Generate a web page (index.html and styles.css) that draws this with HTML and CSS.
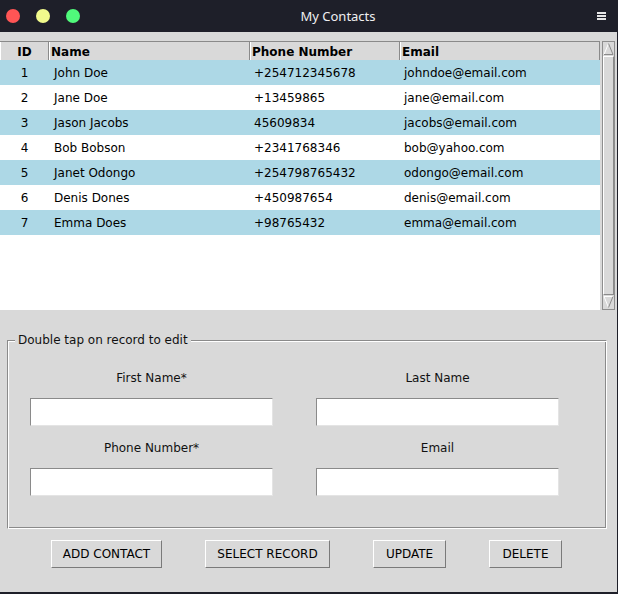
FILE: index.html
```html
<!DOCTYPE html>
<html>
<head>
<meta charset="utf-8">
<title>My Contacts</title>
<link rel="stylesheet" href="styles.css">
</head>
<body>
<div class="window">
  <header class="titlebar">
    <div class="lights">
      <span class="dot red"></span>
      <span class="dot yellow"></span>
      <span class="dot green"></span>
    </div>
    <div class="title">My Contacts</div>
    <div class="menu">
      <svg width="9" height="8" viewBox="0 0 9 8"><rect x="0" y="0" width="9" height="2" fill="#e6e6e6"/><rect x="0" y="3" width="9" height="2" fill="#e6e6e6"/><rect x="0" y="6" width="9" height="2" fill="#e6e6e6"/></svg>
    </div>
  </header>
  <main class="content">
    <div class="table-area">
      <div class="tree">
        <div class="head">
          <div class="hc c-id">ID</div>
          <div class="hc c-name">Name</div>
          <div class="hc c-phone">Phone Number</div>
          <div class="hc c-email">Email</div>
        </div>
        <div class="row odd"><div class="c c-id">1</div><div class="c c-name">John Doe</div><div class="c c-phone">+254712345678</div><div class="c c-email">johndoe@email.com</div></div>
        <div class="row"><div class="c c-id">2</div><div class="c c-name">Jane Doe</div><div class="c c-phone">+13459865</div><div class="c c-email">jane@email.com</div></div>
        <div class="row odd"><div class="c c-id">3</div><div class="c c-name">Jason Jacobs</div><div class="c c-phone">45609834</div><div class="c c-email">jacobs@email.com</div></div>
        <div class="row"><div class="c c-id">4</div><div class="c c-name">Bob Bobson</div><div class="c c-phone">+2341768346</div><div class="c c-email">bob@yahoo.com</div></div>
        <div class="row odd"><div class="c c-id">5</div><div class="c c-name">Janet Odongo</div><div class="c c-phone">+254798765432</div><div class="c c-email">odongo@email.com</div></div>
        <div class="row"><div class="c c-id">6</div><div class="c c-name">Denis Dones</div><div class="c c-phone">+450987654</div><div class="c c-email">denis@email.com</div></div>
        <div class="row odd"><div class="c c-id">7</div><div class="c c-name">Emma Does</div><div class="c c-phone">+98765432</div><div class="c c-email">emma@email.com</div></div>
      </div>
      <div class="scrollbar">
        <div class="arrow">
          <svg width="11" height="14" viewBox="0 0 11 14"><polygon points="5.5,1.5 10,12.5 1,12.5" fill="#d9d9d9"/><line x1="1" y1="12.5" x2="5.5" y2="1.5" stroke="#ffffff" stroke-width="1"/><line x1="5.5" y1="1.5" x2="10" y2="12.5" stroke="#8a8a8a" stroke-width="1"/><line x1="1" y1="12.5" x2="10" y2="12.5" stroke="#8a8a8a" stroke-width="1"/></svg>
        </div>
        <div class="thumb"></div>
        <div class="arrow">
          <svg width="11" height="14" viewBox="0 0 11 14"><polygon points="1,1.5 10,1.5 5.5,12.5" fill="#d9d9d9"/><line x1="1" y1="1.5" x2="10" y2="1.5" stroke="#ffffff" stroke-width="1"/><line x1="1" y1="1.5" x2="5.5" y2="12.5" stroke="#ffffff" stroke-width="1"/><line x1="10" y1="1.5" x2="5.5" y2="12.5" stroke="#8a8a8a" stroke-width="1"/></svg>
        </div>
      </div>
    </div>

    <fieldset class="form">
      <legend class="legend">Double tap on record to edit</legend>
      <div class="grid">
        <label class="lbl">First Name*</label>
        <label class="lbl">Last Name</label>
        <input class="entry" type="text">
        <input class="entry" type="text">
        <label class="lbl">Phone Number*</label>
        <label class="lbl">Email</label>
        <input class="entry" type="text">
        <input class="entry" type="text">
      </div>
    </fieldset>

    <div class="buttons">
      <button class="btn btn-add">ADD CONTACT</button>
      <button class="btn btn-select">SELECT RECORD</button>
      <button class="btn btn-small">UPDATE</button>
      <button class="btn btn-small">DELETE</button>
    </div>
  </main>
</div>
</body>
</html>
```
FILE: styles.css
```css
* { box-sizing: border-box; }
html, body { margin: 0; padding: 0; }
body {
  background: #1e1f29;
  font-family: "DejaVu Sans", sans-serif;
  font-size: 12px;
  color: #000;
}
.window {
  width: 618px;
  height: 594px;
  display: flex;
  flex-direction: column;
}
.titlebar {
  height: 32px;
  flex: none;
  display: flex;
  align-items: center;
  background: #1e1f29;
}
.lights {
  width: 80px;
  display: flex;
  gap: 16px;
  padding-left: 6px;
}
.dot {
  width: 14px;
  height: 14px;
  border-radius: 50%;
  display: block;
}
.red { background: #ff5555; }
.yellow { background: #f1fa8c; }
.green { background: #50fa7b; }
.title {
  flex: 1;
  text-align: center;
  color: #f0f0f0;
  font-family: "Noto Sans", sans-serif;
  font-size: 13px;
  line-height: 16px;
  padding-bottom: 1px;
}
.menu {
  width: 22px;
  padding-left: 1px;
  display: flex;
  align-items: center;
}
.menu svg { display: block; }

.content {
  flex: 1;
  background: #d9d9d9;
  margin: 0 1px 2px 0;
  padding-top: 9px;
  display: flex;
  flex-direction: column;
}
.table-area {
  height: 269px;
  display: flex;
  flex: none;
}
.tree {
  width: 600px;
  background: #ffffff;
  border-top: 1px solid #8a8a8a;
}
.head {
  height: 18px;
  display: flex;
  background: #d9d9d9;
}
.hc {
  font-weight: bold;
  line-height: 20px;
  border-left: 1px solid #ffffff;
  border-right: 1px solid #8a8a8a;
  padding-left: 1px;
  white-space: nowrap;
}
.c-id { width: 49px; }
.c-name { width: 201px; }
.c-phone { width: 150px; }
.c-email { width: 200px; }
.hc.c-id { text-align: center; padding-left: 0; }
.row {
  height: 25px;
  display: flex;
  line-height: 27px;
}
.row.odd { background: #add8e6; }
.c { padding-left: 4px; white-space: nowrap; }
.c.c-name { padding-left: 5px; }
.c.c-id { text-align: center; padding-left: 0; }

.scrollbar {
  margin-left: 2px;
  width: 13px;
  border: 1px solid #8e8e8e;
  background: #d9d9d9;
  display: flex;
  flex-direction: column;
}
.arrow {
  height: 14px;
  flex: none;
}
.arrow svg { display: block; }
.thumb {
  flex: 1;
  border-style: solid;
  border-width: 1px;
  border-color: #ffffff #8a8a8a #8a8a8a #ffffff;
}

.form {
  margin: 22px 0 0 7px;
  width: 600px;
  padding: 20px 0 32px 0;
  border-style: solid;
  border-width: 1px;
  border-color: #8a8a8a #ffffff #ffffff #8a8a8a;
  box-shadow: inset 1px 1px 0 #ffffff, inset -1px -1px 0 #8a8a8a;
  min-width: 0;
}
.legend {
  margin-left: 7px;
  padding: 0 3px;
  line-height: 16px;
  font-size: 12px;
  background: #d9d9d9;
  color: #111;
}
.grid {
  display: grid;
  grid-template-columns: 243px 243px;
  grid-template-rows: 20px 28px 22px 28px;
  column-gap: 43px;
  row-gap: 10px;
  padding-left: 22px;
}
.lbl {
  text-align: center;
  line-height: 20px;
  align-self: end;
  color: #111;
}
.entry {
  width: 243px;
  height: 28px;
  margin: 0;
  padding: 0 4px;
  background: #ffffff;
  border-style: solid;
  border-width: 1px;
  border-color: #8a8a8a #e4e4e4 #e4e4e4 #8a8a8a;
  font-family: "DejaVu Sans", sans-serif;
  font-size: 12px;
  outline: none;
}

.buttons {
  margin-top: 11px;
  padding-left: 51px;
  display: flex;
  gap: 43px;
}
.btn {
  height: 28px;
  padding: 0;
  margin: 0;
  text-align: center;
  background: #d9d9d9;
  border-style: solid;
  border-width: 1px;
  border-color: #ffffff #7a7a7a #7a7a7a #ffffff;
  font-family: "DejaVu Sans", sans-serif;
  font-size: 12px;
  color: #000;
  border-radius: 0;
}
.btn-add { width: 111px; }
.btn-select { width: 125px; }
.btn-small { width: 73px; }
```
